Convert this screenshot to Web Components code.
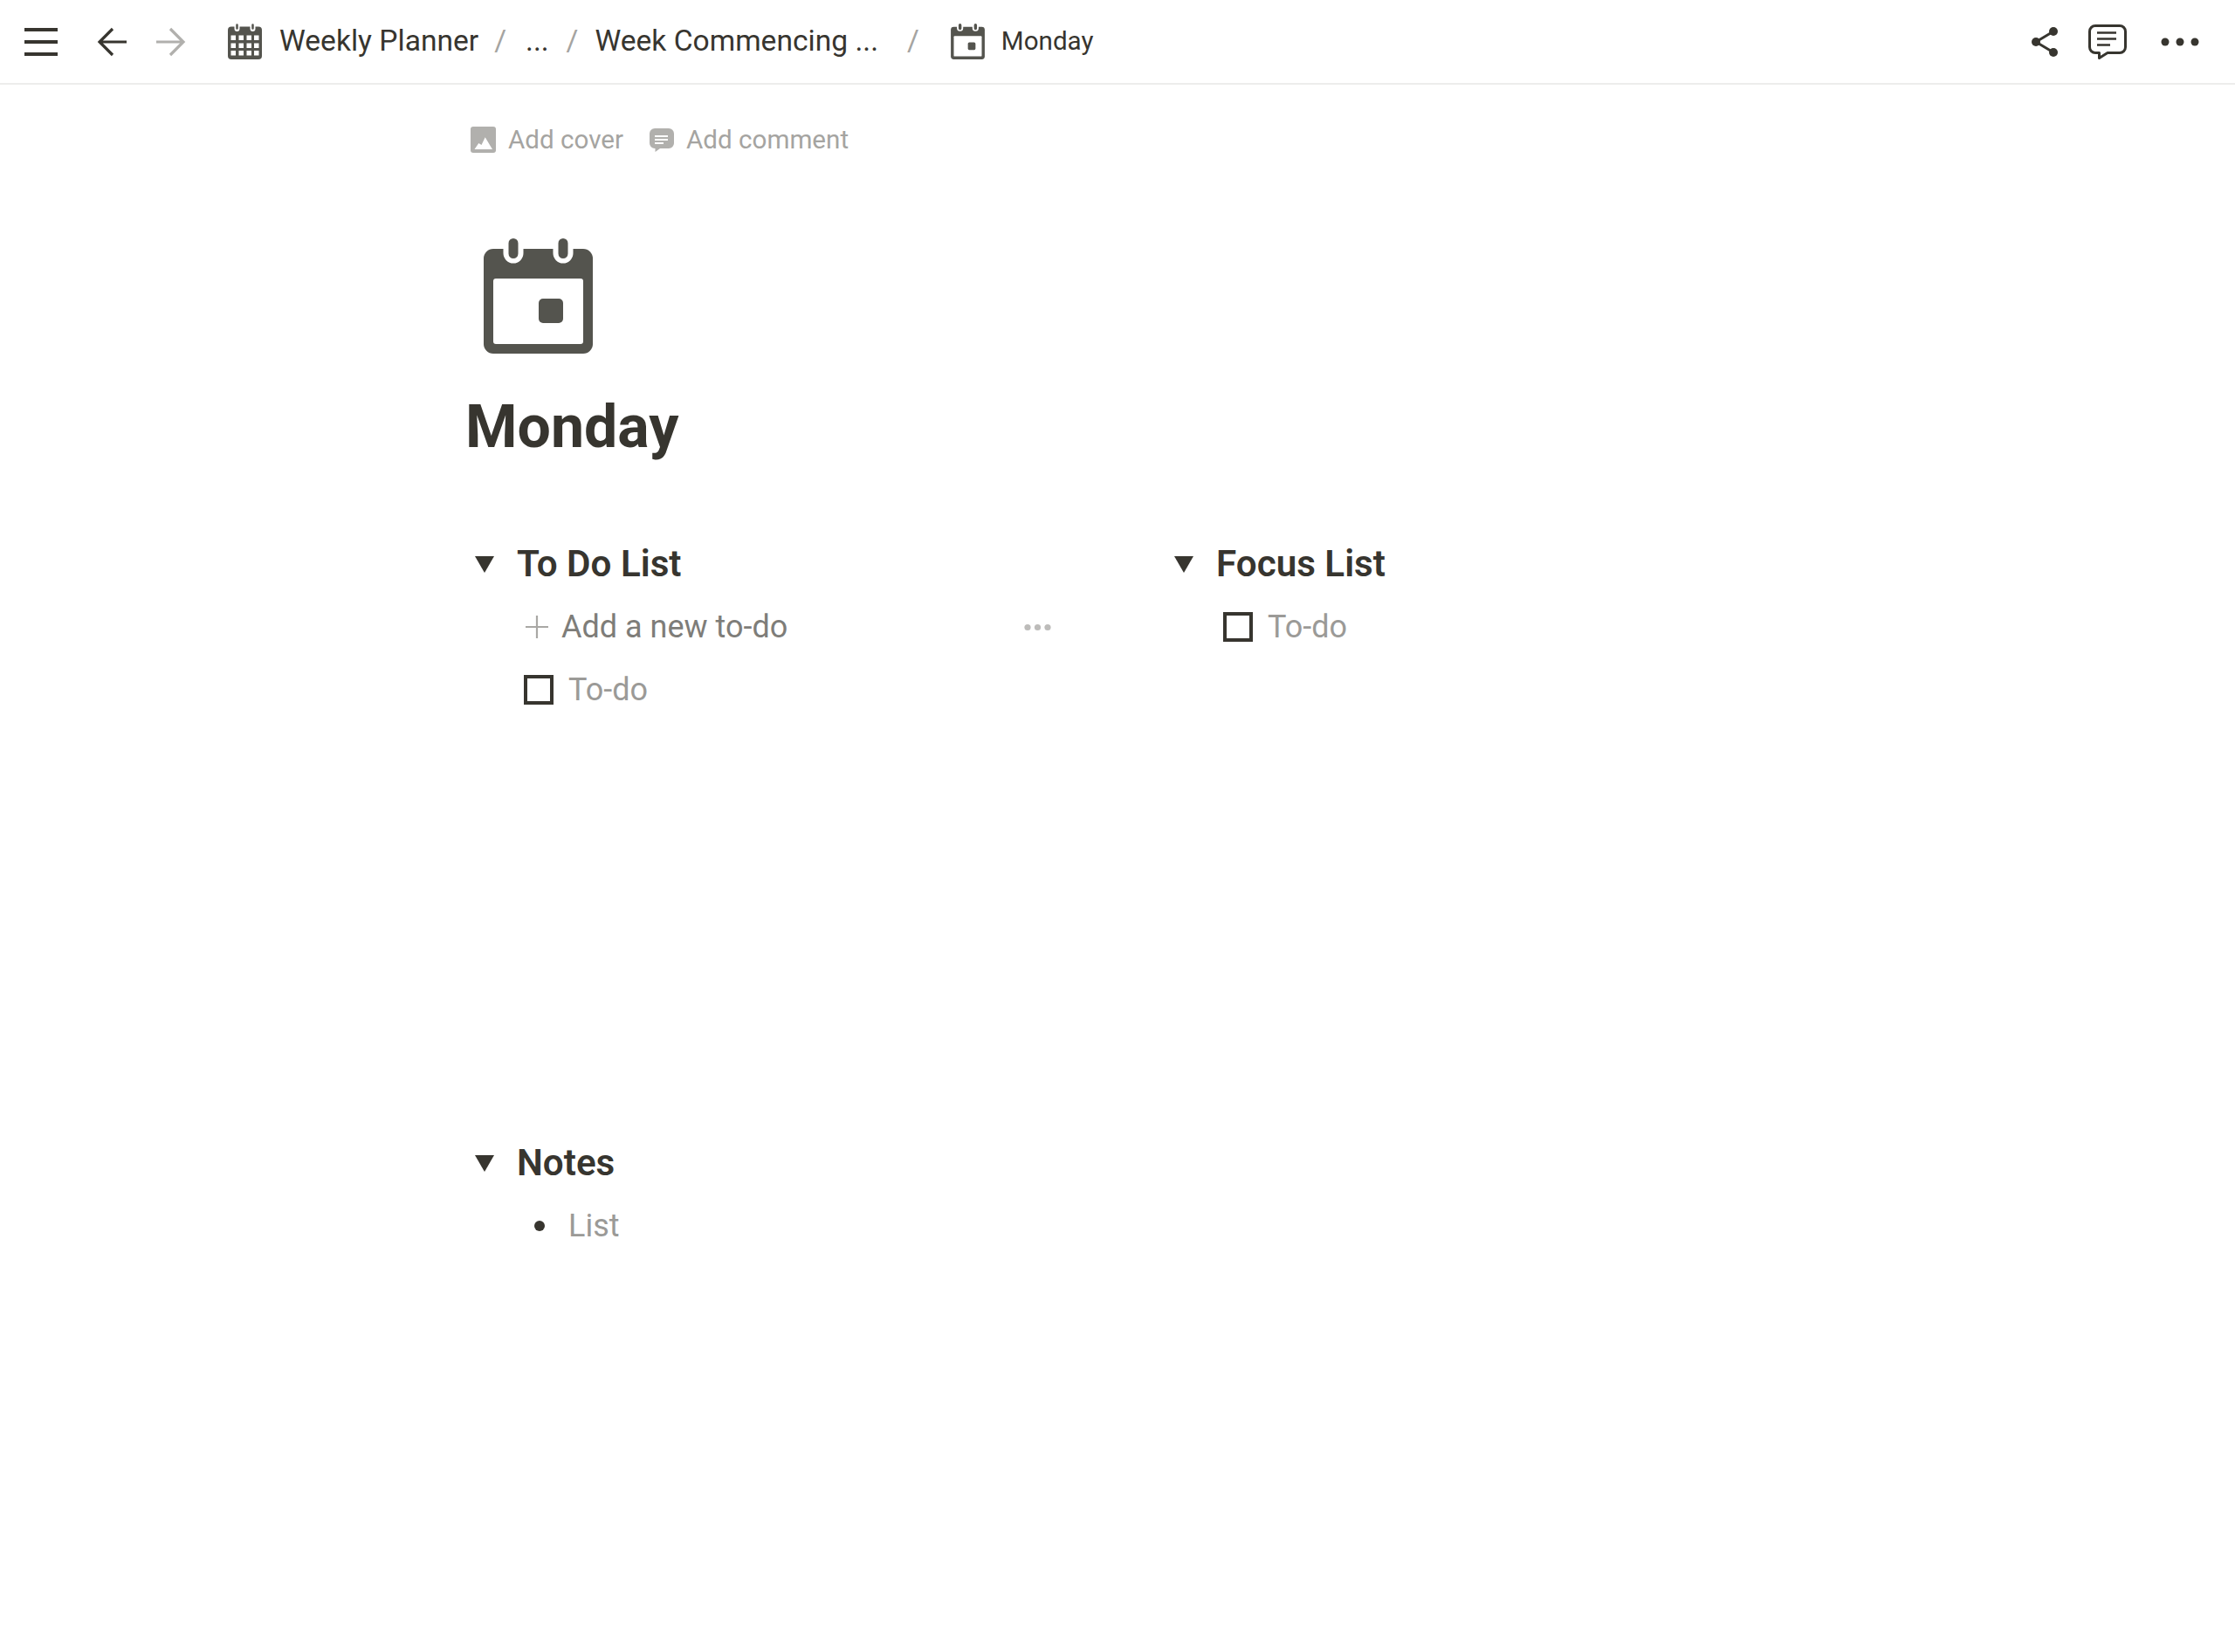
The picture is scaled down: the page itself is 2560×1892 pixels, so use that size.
<!DOCTYPE html>
<html>
<head>
<meta charset="utf-8">
<title>Monday</title>
<style>
  html, body { margin: 0; padding: 0; background: #fff; }
  body { font-family: Roboto, "Liberation Sans", sans-serif; color: #37352f; }
</style>
</head>
<body>
<np-app></np-app>

<script>
const ICONS = {
  menu: `<svg viewBox="0 0 38 32" width="38" height="32"><path d="M0 2h38M0 16h38M0 30h38" stroke="#37352f" stroke-width="4" fill="none"/></svg>`,
  back: `<svg viewBox="0 0 34 34" width="34" height="34"><path d="M34 17H3M18 2 3 17l15 15" stroke="#37352f" stroke-width="3.2" fill="none"/></svg>`,
  forward: `<svg viewBox="0 0 34 34" width="34" height="34"><path d="M0 17h31M16 2l15 15-15 15" stroke="#b1b0ad" stroke-width="3.2" fill="none"/></svg>`,
  month: `<svg viewBox="0 0 39 41" width="39" height="41"><rect y="3.500" width="39" height="37.500" rx="4" fill="#54544e"/><path d="M10.500 2v4M28.500 2v4" stroke="#fff" stroke-width="6" stroke-linecap="round"/><path d="M10.500 1.500v4M28.500 1.500v4" stroke="#54544e" stroke-width="2.500" stroke-linecap="round"/><path fill="#fff" d="M3.500 13.500H9v5.500H3.500zM12.500 13.500H18v5.500h-5.500zM21.500 13.500H27v5.500h-5.500zM30 13.500h5.500v5.500H30zM3.500 22.500H9V28H3.500zM12.500 22.500H18V28h-5.500zM21.500 22.500H27V28h-5.500zM30 22.500h5.500V28H30zM3.500 31H9v5.500H3.500zM12.500 31H18v5.500h-5.500zM21.500 31H27v5.500h-5.500zM30 31h5.500v5.500H30z"/></svg>`,
  day: `<svg viewBox="0 0 125 132" width="100%" height="100%"><rect y="12" width="125" height="120" rx="11" fill="#54544e"/><path d="M34 6v11M91 6v11" stroke="#fff" stroke-width="23" stroke-linecap="round"/><path d="M34 5.500v12M91 5.500v12" stroke="#54544e" stroke-width="11" stroke-linecap="round"/><rect x="11" y="46" width="103" height="75" rx="3" fill="#fff"/><rect x="63" y="69" width="28" height="28" rx="5" fill="#54544e"/></svg>`,
  share: `<svg viewBox="0 0 30 34" width="30" height="34"><path d="M25 5 5 17l20 12" stroke="#37352f" stroke-width="3" fill="none"/><circle cx="25" cy="5" r="5" fill="#37352f"/><circle cx="5" cy="17" r="5" fill="#37352f"/><circle cx="25" cy="29" r="5" fill="#37352f"/></svg>`,
  comment: `<svg viewBox="0 0 44 40" width="44" height="40"><path d="M8 1.500h28a6.500 6.500 0 0 1 6.500 6.500v18a6.500 6.500 0 0 1-6.500 6.500H22L12.500 38.500V32.500H8A6.500 6.500 0 0 1 1.500 26V8A6.500 6.500 0 0 1 8 1.500z" stroke="#37352f" stroke-width="3" fill="none" stroke-linejoin="round"/><path d="M10 9.500h22M10 16.500h22M10 23.500h15" stroke="#37352f" stroke-width="2.600" fill="none"/></svg>`,
  dots: `<svg viewBox="0 0 44 10" width="44" height="10"><circle cx="5" cy="5" r="4.500" fill="#37352f"/><circle cx="22" cy="5" r="4.500" fill="#37352f"/><circle cx="39" cy="5" r="4.500" fill="#37352f"/></svg>`,
  image: `<svg viewBox="0 0 29 30" width="29" height="30"><rect width="29" height="30" rx="3" fill="#b1b0ad"/><path d="M4.500 26 9.300 19l3.200 2 4.200-8.700L25 26z" fill="#fff"/></svg>`,
  note: `<svg viewBox="0 0 28 27" width="28" height="27"><path d="M6 0h16a6 6 0 0 1 6 6v11a6 6 0 0 1-6 6H12l-5.500 4v-4H6a6 6 0 0 1-6-6V6a6 6 0 0 1 6-6z" fill="#b1b0ad"/><path d="M6 9h15M6 13h15M6 17h10" stroke="#fff" stroke-width="1.800" fill="none"/></svg>`,
  plus: `<svg viewBox="0 0 26 26" width="26" height="26"><path d="M13 0v26M0 13h26" stroke="#a9a8a5" stroke-width="2.200" fill="none"/></svg>`,
  more: `<svg viewBox="0 0 31 9" width="31" height="9"><circle cx="4" cy="4.500" r="3.600" fill="#bdbcba"/><circle cx="15.500" cy="4.500" r="3.600" fill="#bdbcba"/><circle cx="27" cy="4.500" r="3.600" fill="#bdbcba"/></svg>`
};

class NpIcon extends HTMLElement {
  constructor() {
    super();
    this.attachShadow({ mode: 'open' }).innerHTML = `
      <style>
        :host { display: inline-flex; flex: none; line-height: 0; }
        svg { display: block; }
      </style>
      ${ICONS[this.getAttribute('name')] || ''}`;
  }
}
customElements.define('np-icon', NpIcon);

// breadcrumb bar across the top
const topbarTemplate = document.createElement('template');
topbarTemplate.innerHTML = `
<style>
  :host {
    display: flex;
    align-items: center;
    height: 95px;
    border-bottom: 2px solid #ededec;
    box-sizing: content-box;
    padding-left: 28px;
    padding-right: 41px;
    font-size: 33.6px;
    color: #37352f;
    white-space: nowrap;
  }
  .nav { display: flex; align-items: center; }
  .nav np-icon:nth-child(2) { margin-left: 45px; }
  .nav np-icon:nth-child(3) { margin-left: 34px; }
  .crumbs { display: flex; align-items: center; margin-left: 48px; }
  .crumbs span { padding-bottom: 2px; }
  .sep { color: #a5a4a1; }
  .s1 { margin: 0 22px 0 18px; }
  .s2 { margin: 0 19px 0 20px; }
  .s3 { margin: 0 36px 0 33px; }
  .page { font-size: 29.6px; margin-left: 19px; }
  .label { margin-left: 20px; }
  .right { margin-left: auto; display: flex; align-items: center; }
  .right np-icon:nth-child(2) { margin-left: 35px; }
  .right np-icon:nth-child(3) { margin-left: 39px; }
</style>
<div class="nav">
  <np-icon name="menu"></np-icon>
  <np-icon name="back"></np-icon>
  <np-icon name="forward"></np-icon>
</div>
<div class="crumbs">
  <np-icon name="month"></np-icon>
  <span class="label">Weekly Planner</span>
  <span class="sep s1">/</span>
  <span>...</span>
  <span class="sep s2">/</span>
  <span>Week Commencing ...</span>
  <span class="sep s3">/</span>
  <np-icon name="day" style="width:39px;height:41px"></np-icon>
  <span class="page">Monday</span>
</div>
<div class="right">
  <np-icon name="share"></np-icon>
  <np-icon name="comment"></np-icon>
  <np-icon name="dots"></np-icon>
</div>
`;

class NpTopbar extends HTMLElement {
  constructor() {
    super();
    this.attachShadow({ mode: 'open' }).appendChild(topbarTemplate.content.cloneNode(true));
  }
}
customElements.define('np-topbar', NpTopbar);

// collapsible heading with its children below
class NpToggle extends HTMLElement {
  constructor() {
    super();
    this.attachShadow({ mode: 'open' }).innerHTML = `
      <style>
        :host { display: block; }
        .head {
          display: flex;
          align-items: center;
          height: 74px;
          font-size: 42.2px;
          font-weight: 600;
          color: #37352f;
        }
        .tri {
          flex: none;
          width: 0;
          height: 0;
          margin: 2px 26px 0 11px;
          border-left: 11px solid transparent;
          border-right: 11px solid transparent;
          border-top: 19px solid #37352f;
        }
        .body { padding-left: 67px; }
      </style>
      <div class="head"><span class="tri"></span><span>${this.getAttribute('label')}</span></div>
      <div class="body"><slot></slot></div>`;
  }
}
customElements.define('np-toggle', NpToggle);

// one 72px row inside a toggle; the kind attribute picks box, bullet or plus
class NpRow extends HTMLElement {
  constructor() {
    super();
    this.attachShadow({ mode: 'open' }).innerHTML = `
      <style>
        :host {
          display: flex;
          align-items: center;
          height: 72px;
          font-size: 36px;
          color: #9b9a97;
        }
        .mark { flex: none; display: flex; align-items: center; justify-content: center; width: 34px; margin-right: 17px; }
        :host([kind="add"]) { color: #7e7d79; }
        :host([kind="add"]) .mark { width: 26px; margin-left: 2px; margin-right: 15px; }
        :host([kind="add"]) .txt { flex: 1; }
        .box { width: 34px; height: 34px; border: 4px solid #37352f; box-sizing: border-box; }
        .dot { width: 12px; height: 12px; border-radius: 50%; background: #37352f; margin-left: 1px; }
      </style>
      <span class="mark">${
        this.getAttribute('kind') === 'add' ? '<np-icon name="plus"></np-icon>'
        : this.getAttribute('kind') === 'bullet' ? '<span class="dot"></span>'
        : '<span class="box"></span>'
      }</span>
      <span class="txt"><slot></slot></span>
      <slot name="end"></slot>`;
  }
}
customElements.define('np-row', NpRow);

const appTemplate = document.createElement('template');
appTemplate.innerHTML = `
<style>
  :host { display: block; min-height: 1892px; background: #fff; font-family: Roboto, "Liberation Sans", sans-serif; }
  main { padding-left: 533px; }
  .meta {
    display: flex;
    align-items: center;
    height: 30px;
    padding: 48px 0 0 6px;
    font-size: 29.6px;
    color: #a5a4a1;
  }
  .meta span { margin-left: 14px; margin-right: 30px; }
  .big { display: block; width: 125px; height: 132px; margin: 98px 0 0 21px; }
  h1 {
    margin: 40px 0 0;
    font-size: 68px;
    line-height: 88px;
    font-weight: 700;
    color: #37352f;
  }
  .cols { display: grid; grid-template-columns: 801px 600px; margin-top: 75px; height: 686px; }
  .first { width: 671px; }
</style>
<np-topbar></np-topbar>
<main>
  <div class="meta">
    <np-icon name="image"></np-icon><span>Add cover</span>
    <np-icon name="note"></np-icon><span>Add comment</span>
  </div>
  <np-icon class="big" name="day"></np-icon>
  <h1>Monday</h1>
  <div class="cols">
    <np-toggle class="first" label="To Do List">
      <np-row kind="add">Add a new to-do<np-icon slot="end" name="more"></np-icon></np-row>
      <np-row>To-do</np-row>
    </np-toggle>
    <np-toggle label="Focus List">
      <np-row>To-do</np-row>
    </np-toggle>
  </div>
  <np-toggle label="Notes">
    <np-row kind="bullet">List</np-row>
  </np-toggle>
</main>
`;

class NpApp extends HTMLElement {
  constructor() {
    super();
    this.attachShadow({ mode: 'open' }).appendChild(appTemplate.content.cloneNode(true));
  }
}
customElements.define('np-app', NpApp);
</script>
</body>
</html>
